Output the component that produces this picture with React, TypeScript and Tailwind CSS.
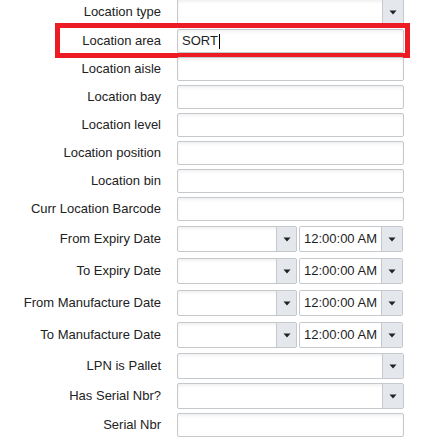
import React from "react";

type Row =
  | { label: string; kind: "text"; value?: string; focused?: boolean }
  | { label: string; kind: "select" }
  | { label: string; kind: "datetime" };

const ROWS: Row[] = [
  { label: "Location type", kind: "select" },
  { label: "Location area", kind: "text", value: "SORT", focused: true },
  { label: "Location aisle", kind: "text" },
  { label: "Location bay", kind: "text" },
  { label: "Location level", kind: "text" },
  { label: "Location position", kind: "text" },
  { label: "Location bin", kind: "text" },
  { label: "Curr Location Barcode", kind: "text" },
  { label: "From Expiry Date", kind: "datetime" },
  { label: "To Expiry Date", kind: "datetime" },
  { label: "From Manufacture Date", kind: "datetime" },
  { label: "To Manufacture Date", kind: "datetime" },
  { label: "LPN is Pallet", kind: "select" },
  { label: "Has Serial Nbr?", kind: "select" },
  { label: "Serial Nbr", kind: "text" },
];

function Caret() {
  return (
    <svg width="8" height="5" viewBox="0 0 8 5" aria-hidden="true">
      <polygon points="0.5,0.5 7.5,0.5 4,4.5" fill="#222" />
    </svg>
  );
}

function DropButton({ w }: { w: string }) {
  return (
    <div className={`${w} h-full flex items-center justify-center bg-[#e4e7eb] border-l border-[#c5c8cc]`}>
      <Caret />
    </div>
  );
}

function Field({ row }: { row: Row }) {
  if (row.kind === "text") {
    return (
      <div className="w-[227px] h-[24px] flex items-center border border-[#c5c9cd] rounded-[2px] bg-white shadow-[inset_0_2px_3px_rgba(0,0,0,0.06)] pl-[4px] text-[13px] text-[#1e1e1e]">
        {row.value}
        {row.focused && <span className="ml-[1px] w-px h-[15px] bg-black" />}
      </div>
    );
  }
  if (row.kind === "select") {
    return (
      <div className="w-[227px] h-[26px] flex border border-[#c5c9cd] rounded-[2px] overflow-hidden bg-white shadow-[inset_0_2px_3px_rgba(0,0,0,0.06)]">
        <div className="flex-1" />
        <DropButton w="w-[21px]" />
      </div>
    );
  }
  return (
    <div className="flex gap-[2px]">
      <div className="w-[120px] h-[26px] flex border border-[#c5c9cd] rounded-[2px] overflow-hidden bg-white shadow-[inset_0_2px_3px_rgba(0,0,0,0.06)]">
        <div className="flex-1" />
        <DropButton w="w-[20px]" />
      </div>
      <div className="w-[104px] h-[26px] flex border border-[#c5c9cd] rounded-[2px] overflow-hidden bg-white">
        <div className="flex-1 flex items-center pl-[4px] text-[13px] text-[#1e1e1e]">12:00:00 AM</div>
        <DropButton w="w-[21px]" />
      </div>
    </div>
  );
}

function rowHeight(row: Row, index: number) {
  if (index === 0) return "h-[30px]";
  if (row.kind === "datetime") return "h-[32px]";
  if (row.kind === "select") return "h-[30px]";
  return "h-[28px]";
}

export default function App() {
  return (
    <div className="w-[435px] h-[441px] overflow-hidden bg-white font-['Liberation_Sans',Arial,sans-serif]">
      <div className="-mt-[3px] flex flex-col">
        {ROWS.map((row, i) => (
          <div key={row.label} className={`relative flex items-center ${rowHeight(row, i)}`}>
            <div className="w-[161px] text-right text-[13px] text-[#222] whitespace-nowrap">{row.label}</div>
            <div className="ml-[16px]">
              <Field row={row} />
            </div>
            {row.kind === "text" && row.focused && (
              <div className="absolute -top-[4px] left-[55px] w-[355px] h-[35px] border-[5px] border-[#ed1c24] pointer-events-none" />
            )}
          </div>
        ))}
      </div>
    </div>
  );
}
